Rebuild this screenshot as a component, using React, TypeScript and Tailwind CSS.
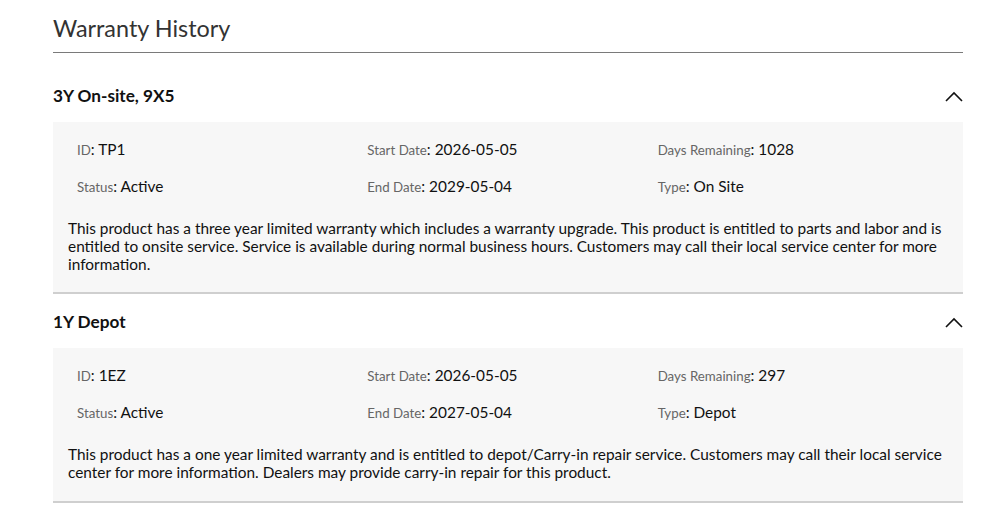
type Warranty = {
  name: string;
  id: string;
  status: string;
  start: string;
  end: string;
  days: string;
  type: string;
  text: string;
};

const WARRANTIES: Warranty[] = [
  {
    name: '3Y On-site, 9X5',
    id: 'TP1',
    status: 'Active',
    start: '2026-05-05',
    end: '2029-05-04',
    days: '1028',
    type: 'On Site',
    text:
      'This product has a three year limited warranty which includes a warranty upgrade. This product is entitled to parts and labor and is entitled to onsite service. Service is available during normal business hours. Customers may call their local service center for more information.',
  },
  {
    name: '1Y Depot',
    id: '1EZ',
    status: 'Active',
    start: '2026-05-05',
    end: '2027-05-04',
    days: '297',
    type: 'Depot',
    text:
      'This product has a one year limited warranty and is entitled to depot/Carry-in repair service. Customers may call their local service center for more information. Dealers may provide carry-in repair for this product.',
  },
];

function Field({ label, value }: { label: string; value: string }) {
  return (
    <div className="text-[15.4px] leading-[20px] text-[#111]">
      <span className="text-[13.3px] text-[#666]">{label}</span>: {value}
    </div>
  );
}

function Chevron() {
  return (
    <svg width={18} height={11} viewBox="0 0 18 11" fill="none" stroke="#111" strokeWidth={1.6}>
      <path d="M1 10 L9 2 L17 10" />
    </svg>
  );
}

export default function App() {
  return (
    <div className="min-h-screen bg-white font-['Lato','Open_Sans',sans-serif]">
      <div className="ml-[53px] w-[910px]">
        <h2 className="pt-[12px] pb-[8px] text-[23.4px] leading-[32px] text-[#333] border-b border-[#7a7a7a]">
          Warranty History
        </h2>
        {WARRANTIES.map((w, i) => (
          <section key={w.name}>
            <div
              className={`flex items-center justify-between pb-[14px] ${i === 0 ? 'pt-[31px]' : 'pt-[16px]'}`}
            >
              <h3 className="text-[17.2px] leading-[24px] font-bold text-[#111]">{w.name}</h3>
              <Chevron />
            </div>
            <div
              className={`bg-[#f7f7f7] border-b-2 border-[#cfcfcf] px-[15px] pt-[17px] ${i === 0 ? 'pb-[19px]' : 'pb-[20px]'}`}
            >
              <div className="grid grid-cols-3 gap-y-[16px] pl-[9px]">
                <Field label="ID" value={w.id} />
                <Field label="Start Date" value={w.start} />
                <Field label="Days Remaining" value={w.days} />
                <Field label="Status" value={w.status} />
                <Field label="End Date" value={w.end} />
                <Field label="Type" value={w.type} />
              </div>
              <p className="mt-[22px] text-[15.4px] leading-[18px] text-[#111]">{w.text}</p>
            </div>
          </section>
        ))}
      </div>
    </div>
  );
}
